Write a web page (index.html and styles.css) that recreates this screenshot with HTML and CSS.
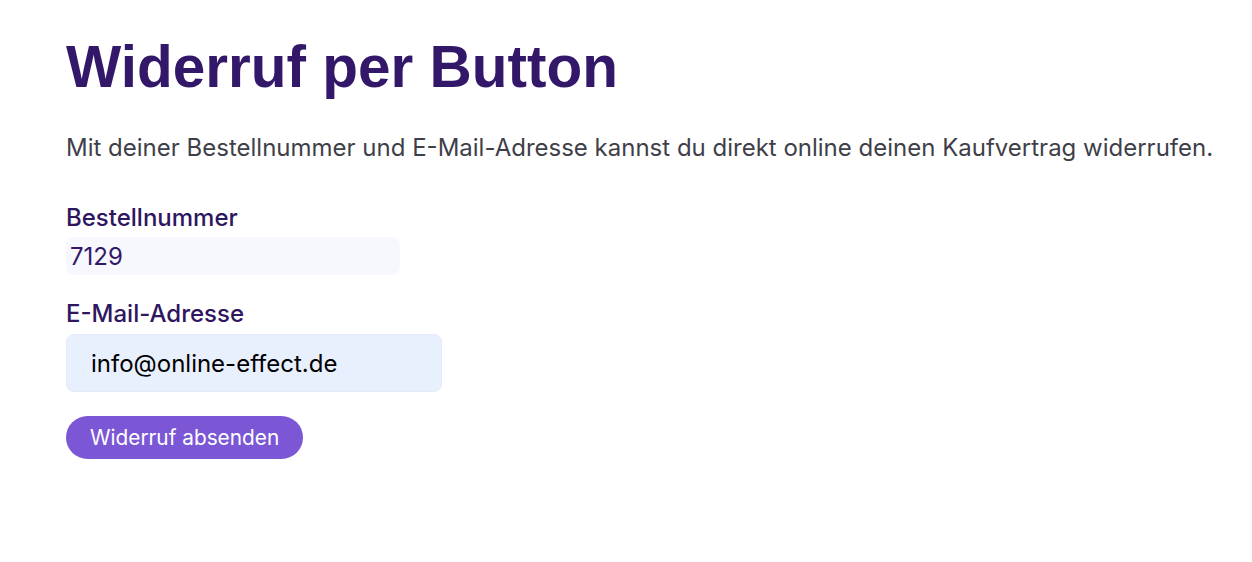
FILE: index.html
```html
<!DOCTYPE html>
<html lang="de">
<head>
<meta charset="utf-8">
<title>Widerruf per Button</title>
<link rel="stylesheet" href="styles.css">
</head>
<body>
<main class="page">
  <h1 class="title">Widerruf per Button</h1>
  <p class="intro">Mit deiner Bestellnummer und E-Mail-Adresse kannst du direkt online deinen Kaufvertrag widerrufen.</p>
  <form class="form">
    <div class="field">
      <label class="label" for="order">Bestellnummer</label>
      <input class="input input-order" id="order" type="text" value="7129">
    </div>
    <div class="field">
      <label class="label" for="email">E-Mail-Adresse</label>
      <input class="input input-email" id="email" type="email" value="info@online-effect.de">
    </div>
    <button class="submit" type="button">Widerruf absenden</button>
  </form>
</main>
</body>
</html>
```

FILE: styles.css
```css
html, body {
  margin: 0;
  padding: 0;
  background: #ffffff;
}

.page {
  padding: 31px 0 0 66px;
  font-family: Inter, "Noto Sans", sans-serif;
}

.title {
  margin: 0;
  font-family: "Liberation Sans", Arial, sans-serif;
  font-weight: 700;
  font-size: 58.5px;
  line-height: 72px;
  color: #33186a;
}

.intro {
  margin: 29px 0 0;
  font-size: 24px;
  line-height: 32px;
  color: #3f3f4a;
}

.form {
  display: flex;
  flex-direction: column;
  align-items: flex-start;
  margin-top: 39px;
}

.field {
  display: flex;
  flex-direction: column;
  align-items: flex-start;
  margin-bottom: 24px;
}

.label {
  font-size: 24px;
  font-weight: 500;
  line-height: 30px;
  color: #2e1660;
  margin-bottom: 4px;
}

.input {
  font-family: Inter, "Noto Sans", sans-serif;
  border: 0;
  outline: none;
  border-radius: 8px;
  font-size: 24px;
  box-sizing: border-box;
}

.input-order {
  width: 334px;
  height: 38px;
  padding: 0 4px;
  background: #f7f8fe;
  color: #33186a;
}

.input-email {
  width: 376px;
  height: 58px;
  margin-top: 1px;
  padding: 0 24px;
  background: #e8f0fe;
  color: #000000;
  border: 1px solid #e4ebf8;
}

.submit {
  height: 43px;
  padding: 0 24px;
  border: 0;
  border-radius: 22px;
  background: #7b57d6;
  color: #ffffff;
  font-family: Inter, "Noto Sans", sans-serif;
  font-size: 20.8px;
}
```
